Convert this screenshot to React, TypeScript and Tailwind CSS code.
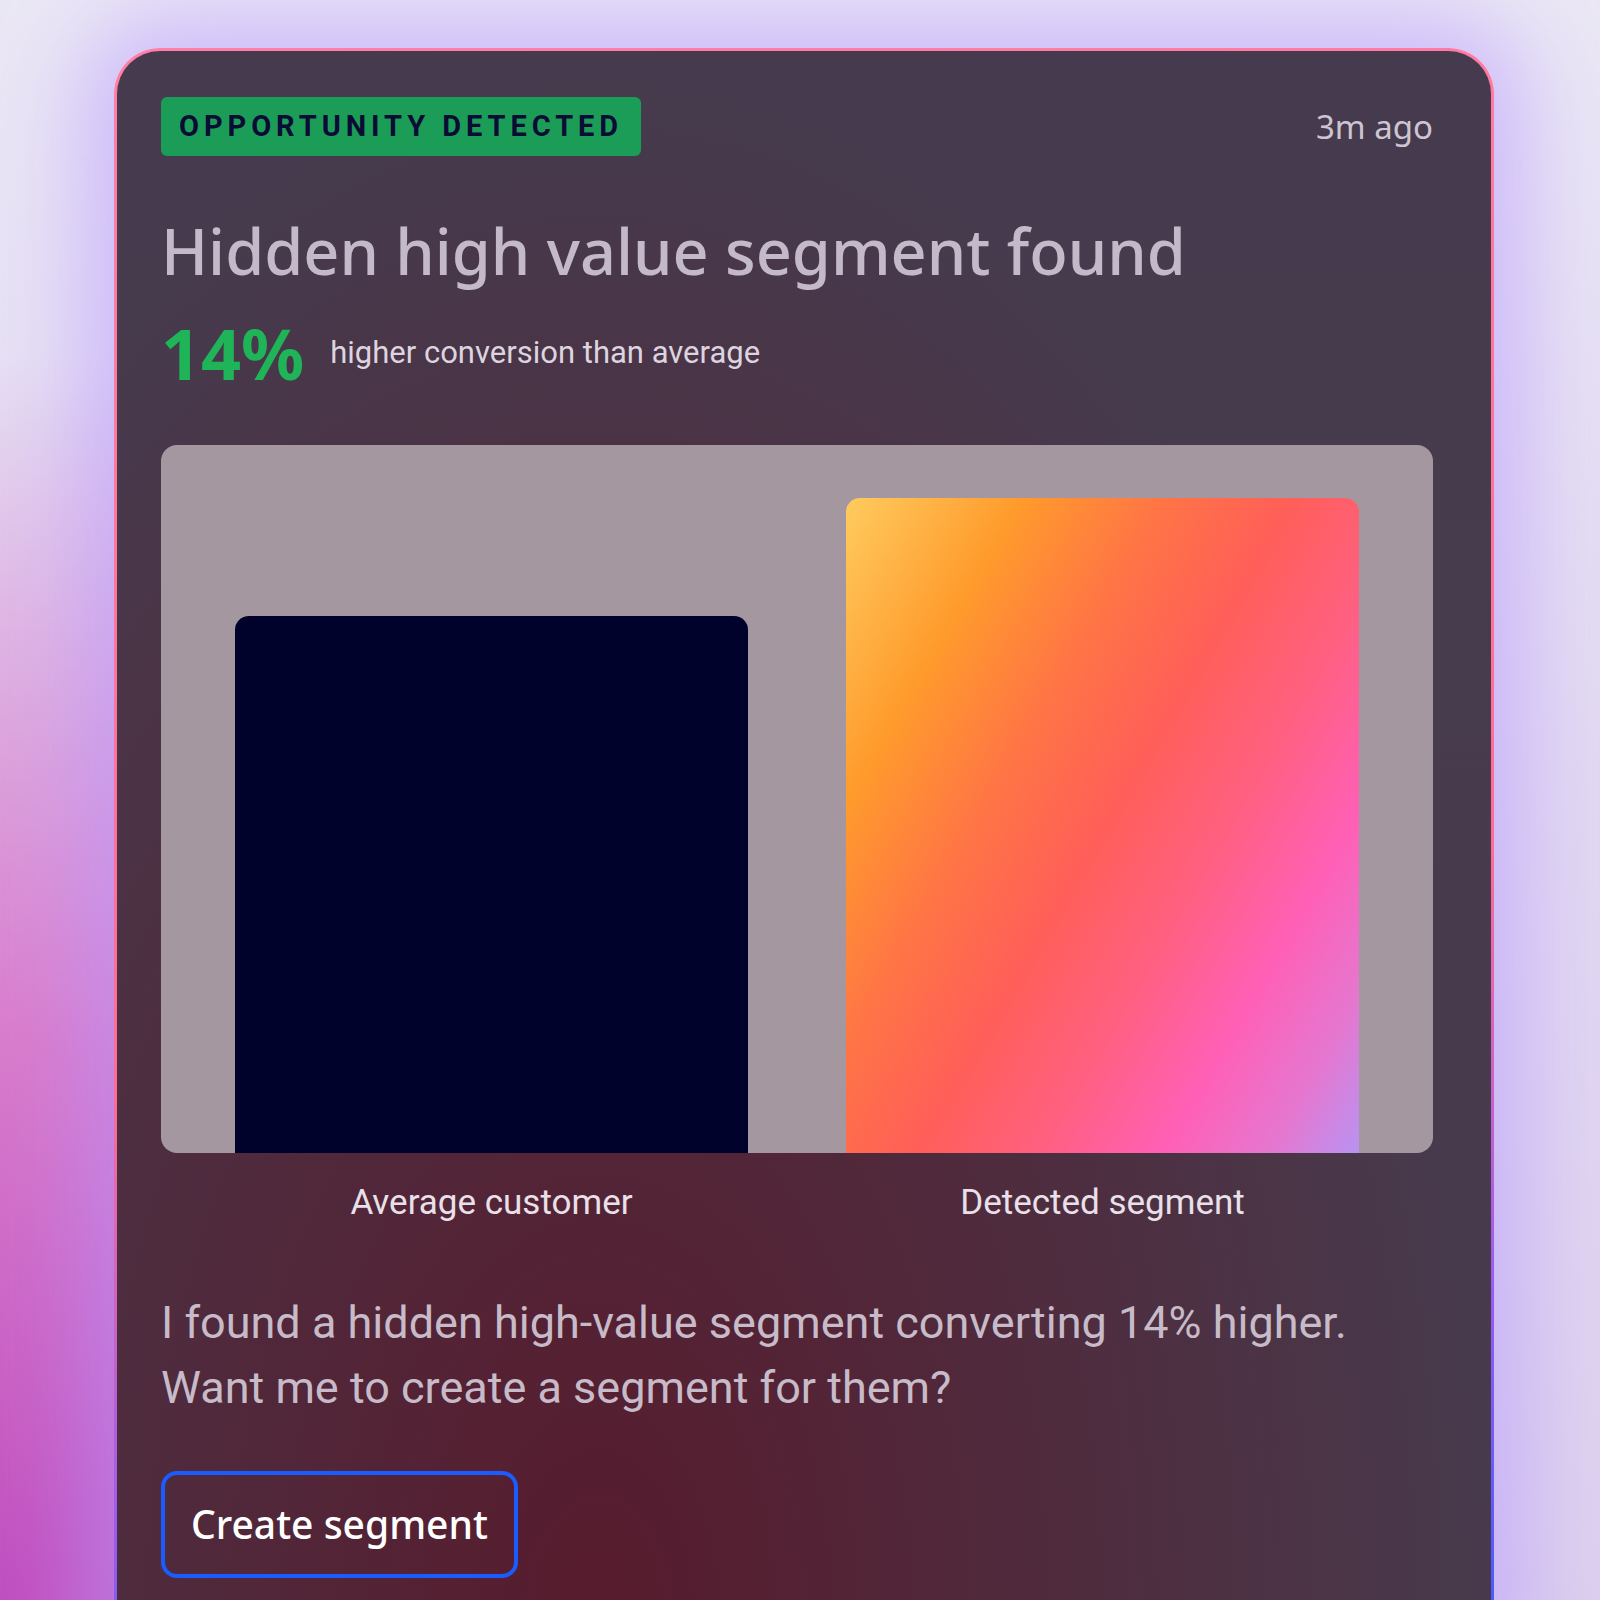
import React from "react"

const bars = [
  { label: "Average customer", height: "h-[537px]", fill: "bg-[#01022c]" },
  {
    label: "Detected segment",
    height: "h-[655px]",
    fill: "bg-[linear-gradient(120deg,#ffcb5e_0%,#ff9a2c_20%,#ff7446_36%,#ff5f58_50%,#ff6080_64%,#ff60b6_78%,#e577d0_90%,#b893f2_100%)]",
  },
]

const App: React.FC = () => {
  return (
    <div className="relative h-[1600px] w-full overflow-hidden bg-[radial-gradient(ellipse_at_0%_100%,#c04fbf_0%,#d97ccc_25%,rgba(230,170,220,0)_55%),linear-gradient(180deg,#ebe8f5_0%,#e2d9f2_50%,#ddd0ee_100%)]">
      <div className="ml-[114px] mt-[48px] w-[1380px] rounded-[46px] bg-[linear-gradient(170deg,#ff7fa6_0%,#ff6b95_55%,#9a5cf0_78%,#2f5bff_100%)] p-[3px] shadow-[0_0_90px_30px_rgba(180,150,255,0.55)]">
        <div className="rounded-[43px] bg-[radial-gradient(ellipse_at_35%_95%,rgba(88,26,44,0.95)_0%,rgba(84,32,50,0.6)_35%,rgba(72,58,76,0)_70%),linear-gradient(180deg,#463b4e_0%,#483a4c_100%)] pb-[120px] pl-[44px] pr-[58px] pt-[46px] font-['Noto_Sans',sans-serif]">
          <div className="flex items-center justify-between">
            <div className="flex h-[59px] items-center rounded-[6px] bg-[#1b9d57] px-[18px] font-['Roboto',sans-serif] text-[29px] font-bold tracking-[0.17em] text-[#0b0c35]">
              OPPORTUNITY DETECTED
            </div>
            <div className="text-[33px] text-[#cec5d2]">3m ago</div>
          </div>

          <h1 className="mt-[63px] text-[63px] font-medium leading-none text-[#c4b9c8]">
            Hidden high value segment found
          </h1>

          <div className="mt-[36px] flex items-center gap-[26px]">
            <span className="text-[70px] font-bold leading-none text-[#1fb458]">14%</span>
            <span className="font-['Roboto',sans-serif] text-[31px] text-[#ddd4df]">higher conversion than average</span>
          </div>

          <div className="mt-[57px] flex h-[708px] items-end justify-between rounded-[16px] bg-[#a4979f] px-[74px]">
            {bars.map((bar) => (
              <div key={bar.label} className={`w-[513px] rounded-t-[14px] ${bar.height} ${bar.fill}`} />
            ))}
          </div>

          <div className="mt-[24px] flex justify-between px-[74px]">
            {bars.map((bar) => (
              <div key={bar.label} className="w-[513px] text-center font-['Roboto',sans-serif] text-[35px] text-[#e9e0e9]">
                {bar.label}
              </div>
            ))}
          </div>

          <p className="mt-[60px] font-['Roboto',sans-serif] text-[45px] leading-[65px] text-[#c8bbc9]">
            I found a hidden high-value segment converting 14% higher.
            <br />
            Want me to create a segment for them?
          </p>

          <button className="mt-[51px] h-[107px] rounded-[16px] border-[4px] border-[#1a5cff] px-[26px] text-[39px] font-medium text-white">
            Create segment
          </button>
        </div>
      </div>
    </div>
  )
}

export default App
